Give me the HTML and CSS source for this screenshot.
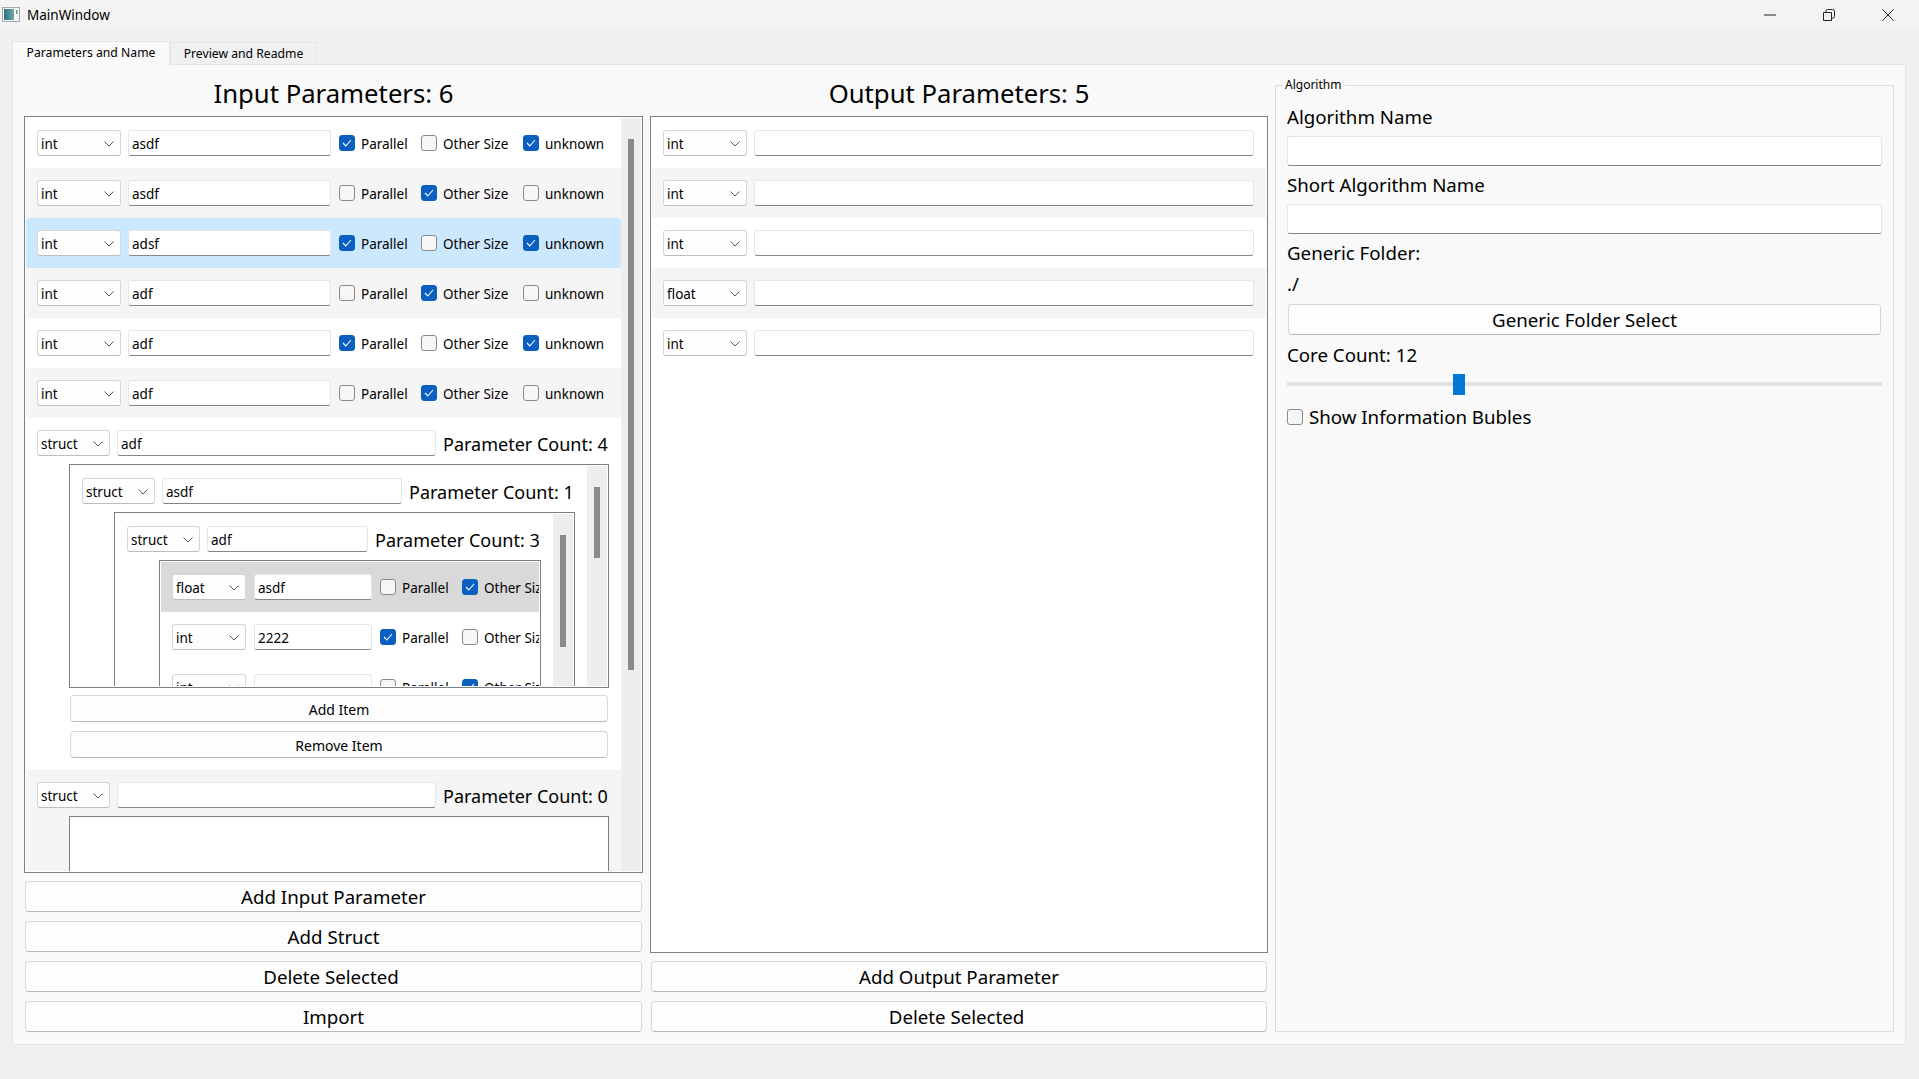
FILE: index.html
```html
<!DOCTYPE html>
<html lang="en">
  <head>
    <meta charset="UTF-8" />
    <title>MainWindow</title>
    <link rel="stylesheet" href="styles.css">
  </head>
  <body>
    <svg class="defs">
      <symbol id="chev" viewBox="0 0 10 6"><path d="M0.5 0.5 L5 5 L9.5 0.5" fill="none" stroke="#555" stroke-width="1" /></symbol>
      <symbol id="tick" viewBox="0 0 10 8"><path d="M1 4 L3.8 7 L9 1" fill="none" stroke="#fff" stroke-width="1.1" /></symbol>
    </svg>

    <div class="titlebar">
      <svg class="appicon" viewBox="0 0 18 15">
        <defs>
          <linearGradient id="appfill" x1="0" x2="1" y1="0" y2="0">
            <stop offset="0" stop-color="#2f6f8a" />
            <stop offset="1" stop-color="#6fae9c" />
          </linearGradient>
        </defs>
        <rect x="0.5" y="0.5" width="17" height="14" fill="#f6f6f6" stroke="#a8a8a8" />
        <rect x="2" y="2" width="10" height="11" fill="url(#appfill)" />
        <rect x="14" y="3" width="1.5" height="4" fill="#6a9a90" />
      </svg>
      <span class="wintitle">MainWindow</span>
      <div class="winbtns">
        <svg viewBox="0 0 12 12"><path d="M0 6 H12" stroke="#222" fill="none" /></svg>
        <svg viewBox="0 0 12 12"><path d="M0.5 3.5 H8.5 V11.5 H0.5 Z M3 3 V2 Q3 0.5 4.5 0.5 H9.5 Q11.5 0.5 11.5 2.5 V7.5 Q11.5 9 10 9 H9" stroke="#222" fill="none" /></svg>
        <svg viewBox="0 0 12 12"><path d="M0.5 0.5 L11.5 11.5 M11.5 0.5 L0.5 11.5" stroke="#222" fill="none" /></svg>
      </div>
    </div>

    <div class="tabs">
      <div class="tab active">Parameters and Name</div>
      <div class="tab">Preview and Readme</div>
    </div>

    <div class="pane">
      <!-- input parameters -->
      <div class="col">
        <h2>Input Parameters: 6</h2>
        <div class="frame grow">
          <div class="content">
            <div class="row">
              <div class="combo w84">int<svg><use href="#chev" /></svg></div>
              <input class="edit w203" type="text" value="asdf" />
              <div class="opt w82"><span class="box on"><svg><use href="#tick" /></svg></span>Parallel</div>
              <div class="opt w102"><span class="box"></span>Other Size</div>
              <div class="opt"><span class="box on"><svg><use href="#tick" /></svg></span>unknown</div>
            </div>
            <div class="row alt">
              <div class="combo w84">int<svg><use href="#chev" /></svg></div>
              <input class="edit w203" type="text" value="asdf" />
              <div class="opt w82"><span class="box"></span>Parallel</div>
              <div class="opt w102"><span class="box on"><svg><use href="#tick" /></svg></span>Other Size</div>
              <div class="opt"><span class="box"></span>unknown</div>
            </div>
            <div class="row selected">
              <div class="combo w84">int<svg><use href="#chev" /></svg></div>
              <input class="edit w203" type="text" value="adsf" />
              <div class="opt w82"><span class="box on"><svg><use href="#tick" /></svg></span>Parallel</div>
              <div class="opt w102"><span class="box"></span>Other Size</div>
              <div class="opt"><span class="box on"><svg><use href="#tick" /></svg></span>unknown</div>
            </div>
            <div class="row alt">
              <div class="combo w84">int<svg><use href="#chev" /></svg></div>
              <input class="edit w203" type="text" value="adf" />
              <div class="opt w82"><span class="box"></span>Parallel</div>
              <div class="opt w102"><span class="box on"><svg><use href="#tick" /></svg></span>Other Size</div>
              <div class="opt"><span class="box"></span>unknown</div>
            </div>
            <div class="row">
              <div class="combo w84">int<svg><use href="#chev" /></svg></div>
              <input class="edit w203" type="text" value="adf" />
              <div class="opt w82"><span class="box on"><svg><use href="#tick" /></svg></span>Parallel</div>
              <div class="opt w102"><span class="box"></span>Other Size</div>
              <div class="opt"><span class="box on"><svg><use href="#tick" /></svg></span>unknown</div>
            </div>
            <div class="row alt">
              <div class="combo w84">int<svg><use href="#chev" /></svg></div>
              <input class="edit w203" type="text" value="adf" />
              <div class="opt w82"><span class="box"></span>Parallel</div>
              <div class="opt w102"><span class="box on"><svg><use href="#tick" /></svg></span>Other Size</div>
              <div class="opt"><span class="box"></span>unknown</div>
            </div>

            <!-- struct with nested structs -->
            <div class="struct">
              <div class="struct-head">
                <div class="combo w72">struct<svg><use href="#chev" /></svg></div>
                <input class="edit flex" type="text" value="adf" />
                <span class="count">Parameter Count: 4</span>
              </div>
              <div class="frame nested">
                <div class="content">
                  <div class="struct">
                    <div class="struct-head">
                      <div class="combo w72">struct<svg><use href="#chev" /></svg></div>
                      <input class="edit flex" type="text" value="asdf" />
                      <span class="count">Parameter Count: 1</span>
                    </div>
                    <div class="frame nested">
                      <div class="content">
                        <div class="struct">
                          <div class="struct-head">
                            <div class="combo w72">struct<svg><use href="#chev" /></svg></div>
                            <input class="edit flex" type="text" value="adf" />
                            <span class="count">Parameter Count: 3</span>
                          </div>
                          <div class="frame nested boxed">
                            <div class="content">
                              <div class="row grey">
                                <div class="combo w74">float<svg><use href="#chev" /></svg></div>
                                <input class="edit w119" type="text" value="asdf" />
                                <div class="opt w82"><span class="box"></span>Parallel</div>
                                <div class="opt w102"><span class="box on"><svg><use href="#tick" /></svg></span>Other Size</div>
                              </div>
                              <div class="row">
                                <div class="combo w74">int<svg><use href="#chev" /></svg></div>
                                <input class="edit w119" type="text" value="2222" />
                                <div class="opt w82"><span class="box on"><svg><use href="#tick" /></svg></span>Parallel</div>
                                <div class="opt w102"><span class="box"></span>Other Size</div>
                              </div>
                              <div class="row">
                                <div class="combo w74">int<svg><use href="#chev" /></svg></div>
                                <input class="edit w119" type="text" value="" />
                                <div class="opt w82"><span class="box"></span>Parallel</div>
                                <div class="opt w102"><span class="box on"><svg><use href="#tick" /></svg></span>Other Size</div>
                              </div>
                            </div>
                          </div>
                        </div>
                      </div>
                      <div class="scrollbar"><div class="thumb t-small2"></div></div>
                    </div>
                  </div>
                </div>
                <div class="scrollbar"><div class="thumb t-small"></div></div>
              </div>
              <button class="btn small" type="button">Add Item</button>
              <button class="btn small" type="button">Remove Item</button>
            </div>

            <div class="struct alt">
              <div class="struct-head">
                <div class="combo w72">struct<svg><use href="#chev" /></svg></div>
                <input class="edit flex" type="text" value="" />
                <span class="count">Parameter Count: 0</span>
              </div>
              <div class="frame nested empty"><div class="content"></div></div>
            </div>
          </div>
          <div class="scrollbar"><div class="thumb t-main"></div></div>
        </div>
        <button class="btn" type="button">Add Input Parameter</button>
        <button class="btn" type="button">Add Struct</button>
        <button class="btn" type="button">Delete Selected&nbsp;</button>
        <button class="btn" type="button">Import</button>
      </div>

      <!-- output parameters -->
      <div class="col">
        <h2>Output Parameters: 5</h2>
        <div class="frame grow">
          <div class="content">
            <div class="row">
              <div class="combo w84">int<svg><use href="#chev" /></svg></div>
              <input class="edit flex" type="text" />
            </div>
            <div class="row alt">
              <div class="combo w84">int<svg><use href="#chev" /></svg></div>
              <input class="edit flex" type="text" />
            </div>
            <div class="row">
              <div class="combo w84">int<svg><use href="#chev" /></svg></div>
              <input class="edit flex" type="text" />
            </div>
            <div class="row alt">
              <div class="combo w84">float<svg><use href="#chev" /></svg></div>
              <input class="edit flex" type="text" />
            </div>
            <div class="row">
              <div class="combo w84">int<svg><use href="#chev" /></svg></div>
              <input class="edit flex" type="text" />
            </div>
          </div>
        </div>
        <button class="btn" type="button">Add Output Parameter</button>
        <button class="btn" type="button">Delete Selected&nbsp;</button>
      </div>

      <!-- algorithm -->
      <div class="group">
        <span class="group-title">Algorithm</span>
        <label class="lbl">Algorithm Name</label>
        <input class="edit tall" type="text" />
        <label class="lbl mt8">Short Algorithm Name</label>
        <input class="edit tall" type="text" />
        <label class="lbl mt8">Generic Folder:</label>
        <label class="lbl mt7">./</label>
        <button class="btn mt7" type="button">Generic Folder Select</button>
        <label class="lbl">Core Count: 12</label>
        <div class="slider"><div class="handle"></div></div>
        <div class="opt big"><span class="box"></span>Show Information Bubles</div>
      </div>
    </div>
  </body>
</html>
```

FILE: styles.css
```css
* {
  box-sizing: border-box;
}
html,
body {
  height: 100%;
}
body {
  margin: 0;
  overflow: hidden;
  background-color: #f0f0f0;
  color: #000;
  font-family: "Noto Sans", sans-serif;
  font-size: 13.5px;
}
.defs {
  display: none;
}

/* title bar */
.titlebar {
  display: flex;
  align-items: center;
  height: 29px;
  padding-left: 2px;
  background-color: #f3f3f3;
}
.appicon {
  width: 18px;
  height: 15px;
}
.wintitle {
  margin-left: 7px;
  font-size: 13.5px;
}
.winbtns {
  display: flex;
  gap: 47px;
  margin-left: auto;
  padding-right: 25px;
}
.winbtns svg {
  width: 12px;
  height: 12px;
}

/* tabs */
.tabs {
  display: flex;
  align-items: flex-end;
  height: 35px;
  padding-left: 12px;
}
.tab {
  width: 147px;
  height: 22px;
  padding-top: 2px;
  border: 1px solid #e5e5e5;
  border-bottom: none;
  background-color: #f0f0f0;
  font-size: 12.2px;
  text-align: center;
}
.tab.active {
  width: 158px;
  height: 24px;
  margin-bottom: -1px;
  background-color: #f9f9f9;
  position: relative;
}

.pane {
  display: grid;
  grid-template-columns: 619px 618px 619px;
  column-gap: 7px;
  width: 1894px;
  height: 981px;
  margin-left: 12px;
  padding: 0 11px 13px;
  border: 1px solid #e5e5e5;
  background-color: #f9f9f9;
}
.col {
  display: flex;
  flex-direction: column;
  min-height: 0;
}
h2 {
  flex: none;
  height: 51px;
  margin: 0;
  padding-top: 11px;
  font-size: 25.7px;
  font-weight: 400;
  line-height: 35px;
  text-align: center;
}

/* scroll areas */
.frame {
  display: flex;
  min-height: 0;
  padding: 1px;
  border: 1px solid #7a7f8a;
  background-color: #fff;
}
.frame.grow {
  flex: 1;
  margin-bottom: 8px;
}
.frame.nested {
  flex: none;
  height: 224px;
  margin-left: 32px;
}
.frame.empty {
  height: 120px;
}
.content {
  flex: 1;
  min-width: 0;
  overflow: hidden;
}
.scrollbar {
  flex: none;
  width: 20px;
  background-color: #eeeeee;
}
.thumb {
  width: 6px;
  margin-left: 7px;
  background-color: #8a8a8a;
}
.t-main {
  height: 531px;
  margin-top: 21px;
}
.t-small {
  height: 71px;
  margin-top: 21px;
}
.t-small2 {
  height: 112px;
  margin-top: 21px;
}

/* rows */
.row {
  display: flex;
  align-items: center;
  flex: none;
  width: 100%;
  height: 50px;
  padding-left: 11px;
  padding-right: 12px;
  gap: 8px;
  white-space: nowrap;
}
.alt {
  background-color: #f5f5f5;
}
.selected {
  border-radius: 3px;
  background-color: #cce8ff;
}
.grey {
  background-color: #d9d9d9;
}
.struct {
  padding: 12px 12px 12px 11px;
}
.struct-head {
  display: flex;
  align-items: center;
  gap: 8px;
  height: 26px;
  margin-bottom: 8px;
}
.count {
  flex: none;
  width: 166px;
  margin-left: -1px;
  padding-top: 2px;
  font-size: 18px;
  white-space: nowrap;
}

/* controls */
.combo {
  display: flex;
  align-items: center;
  justify-content: space-between;
  flex: none;
  height: 26px;
  padding: 1px 6px 0 3px;
  border: 1px solid #d6d6d6;
  border-bottom-color: #bdbdbd;
  border-radius: 3px;
  background-color: #fefefe;
  white-space: nowrap;
}
.combo svg {
  width: 10px;
  height: 6px;
}
.combo + .edit {
  margin-left: -1px;
}
.w72 {
  width: 73px;
}
.w74 {
  width: 74px;
}
.w84 {
  width: 84px;
}
.edit {
  height: 26px;
  padding: 1px 3px 0;
  border: 1px solid #e6e6e6;
  border-bottom: 1px solid #868686;
  border-radius: 3px;
  outline: none;
  background-color: #fff;
  color: #000;
  font-family: inherit;
  font-size: inherit;
}
.edit.flex {
  flex: 1;
  min-width: 0;
}
.w203 {
  flex: none;
  width: 203px;
}
.combo + .w119 {
  flex: none;
  width: 118px;
  margin-left: 0;
}
.edit.tall {
  flex: none;
  width: 595px;
  height: 30px;
  margin-top: 6px;
}
.opt {
  display: flex;
  align-items: center;
  flex: none;
  gap: 6px;
  padding-top: 2px;
  white-space: nowrap;
}
.w82 {
  width: 74px;
}
.w102 {
  width: 94px;
}
.box {
  display: flex;
  align-items: center;
  justify-content: center;
  flex: none;
  width: 16px;
  height: 16px;
  margin-top: -2px;
  border: 1px solid #8a8a8a;
  border-radius: 3px;
  background-color: #f6f6f6;
}
.box.on {
  border-color: #0a5fc0;
  background-color: #0a5fc0;
}
.box svg {
  width: 10px;
  height: 8px;
}
.btn {
  flex: none;
  display: block;
  width: calc(100% - 2px);
  height: 31px;
  margin: 0 1px 9px;
  padding: 0;
  border: 1px solid #d8d8d8;
  border-bottom-color: #b8b8b8;
  border-radius: 4px;
  background-color: #fdfdfd;
  color: #000;
  font-family: inherit;
  font-size: 18.7px;
}
.col .btn:last-child {
  margin-bottom: 0;
}
.btn.small {
  width: 538px;
  height: 27px;
  margin: 7px 0 9px 33px;
  padding-top: 2px;
  font-size: 14px;
}
.btn.small + .btn.small {
  margin-top: 0;
  margin-bottom: 0;
}

/* right group */
.group {
  display: flex;
  flex-direction: column;
  position: relative;
  height: 947px;
  margin-top: 20px;
  padding: 20px 11px 0;
  border: 1px solid #dcdcdc;
}
.group-title {
  position: absolute;
  top: -9px;
  left: 6px;
  padding: 0 4px 0 3px;
  background-color: #f9f9f9;
  font-size: 12px;
  line-height: 16px;
}
.lbl {
  height: 24px;
  font-size: 18.7px;
  line-height: 21px;
}
.mt7 {
  margin-top: 7px;
}
.mt8 {
  margin-top: 8px;
}
.group .btn {
  width: 593px;
  margin-bottom: 9px;
  line-height: 26px;
}
.group .btn.mt7 {
  margin-top: 7px;
}
.slider {
  position: relative;
  flex: none;
  width: 595px;
  height: 21px;
  margin-top: 6px;
  margin-bottom: 14px;
}
.slider::before {
  content: "";
  display: block;
  position: absolute;
  top: 8px;
  left: 0;
  right: 0;
  height: 4px;
  background-color: #e2e2e2;
}
.handle {
  position: absolute;
  top: 0;
  left: 166px;
  width: 12px;
  height: 21px;
  background-color: #0078d7;
}
.opt.big {
  height: 16px;
  padding-top: 0;
  padding-bottom: 2px;
  font-size: 18.7px;
}
.opt.big .box {
  margin-top: 0;
  margin-bottom: -2px;
}
```
